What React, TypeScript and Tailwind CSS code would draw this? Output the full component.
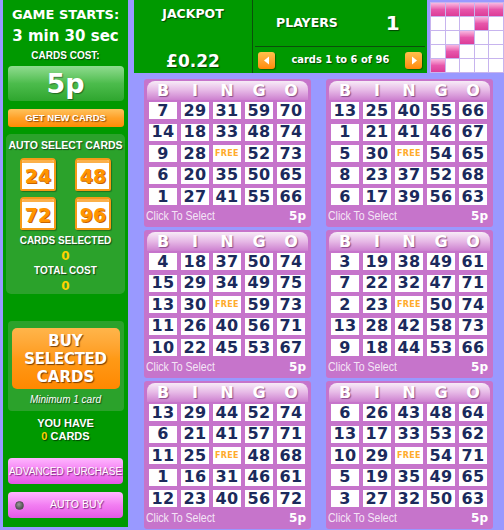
import React from "react";

const cards: (number | null)[][][] = [
  [[7,29,31,59,70],[14,18,33,48,74],[9,28,null,52,73],[6,20,35,50,65],[1,27,41,55,66]],
  [[13,25,40,55,66],[1,21,41,46,67],[5,30,null,54,65],[8,23,37,52,68],[6,17,39,56,63]],
  [[4,18,37,50,74],[15,29,34,49,75],[13,30,null,59,73],[11,26,40,56,71],[10,22,45,53,67]],
  [[3,19,38,49,61],[7,22,32,47,71],[2,23,null,50,74],[13,28,42,58,73],[9,18,44,53,66]],
  [[13,29,44,52,74],[6,21,41,57,71],[11,25,null,48,68],[1,16,31,46,61],[12,23,40,56,72]],
  [[6,26,43,48,64],[13,17,33,53,62],[10,29,null,54,71],[5,19,35,49,65],[3,27,32,50,63]],
];

const V = { fontFamily: '"DejaVu Sans", Verdana, sans-serif' };
const L = { fontFamily: '"Liberation Sans", Arial, sans-serif' };
const shadow = { textShadow: "1px 1px 1px rgba(0,0,0,0.55)" };

function Card({ rows }: { rows: (number | null)[][] }) {
  return (
    <div className="w-[167px] h-[148px] bg-[#c674cb] rounded-[3px] flex flex-col" style={V}>
      <div className="mx-[3px] mt-[2px] h-[19px] rounded-t-[8px] bg-gradient-to-b from-[#f7ecf7] via-[#e6b8e6] to-[#cc80cf] grid grid-cols-[28px_28px_28px_28px_28px] gap-x-[4px] px-[2px]">
        {["B", "I", "N", "G", "O"].map((c) => (
          <div key={c} className="flex items-center justify-center text-white font-bold text-[16px] leading-none" style={{ textShadow: "1px 1px 1px rgba(110,50,110,0.75)" }}>
            {c}
          </div>
        ))}
      </div>
      <div className="ml-[5px] mt-[2px] grid grid-cols-[28px_28px_28px_28px_28px] gap-x-[4px] gap-y-[4.5px]">
        {rows.flat().map((n, i) => (
          <div key={i} className="h-[17px] bg-white flex items-center justify-center">
            {n === null ? (
              <span className="text-[#ffab2a] font-bold text-[8px] tracking-[0.3px]">FREE</span>
            ) : (
              <span className="text-[#1b2a5c] font-bold text-[16px] leading-none tracking-[0.4px]">{n}</span>
            )}
          </div>
        ))}
      </div>
      <div className="flex items-center justify-between flex-1 pl-[2px] pr-[5px]">
        <span className="text-[#f4e4f6] text-[13px] scale-x-[0.81] origin-left whitespace-nowrap" style={L}>
          Click To Select
        </span>
        <span className="text-white font-bold text-[12px]">5p</span>
      </div>
    </div>
  );
}

function CalBtn({ n }: { n: number }) {
  return (
    <div className="w-[36px] h-[33px] rounded-t-[4px] rounded-b-[2px] border-2 border-[#f59a18] bg-white flex flex-col overflow-hidden" style={{ boxShadow: "1px 1px 1px rgba(0,0,0,0.3)" }}>
      <div className="h-[3px] bg-[#fbb04a]" />
      <div className="flex-1 flex items-center justify-center text-[#ff9400] font-bold text-[19px] leading-none" style={{ ...V, textShadow: "1px 1px 0 #c86400" }}>
        {n}
      </div>
    </div>
  );
}

function MiniGrid() {
  const pink = (r: number, c: number) => r === 0 || r + c === 4;
  return (
    <div className="mt-[2px] ml-[3px] w-[74px] h-[71px] bg-[#c7b4ee] grid grid-cols-5 grid-rows-5 gap-px p-px">
      {Array.from({ length: 25 }).map((_, i) => {
        const r = Math.floor(i / 5), c = i % 5;
        return pink(r, c) ? (
          <div key={i} className="bg-gradient-to-b from-[#f7b8e2] via-[#e756ab] to-[#dc3c98]" />
        ) : (
          <div key={i} className="bg-white" />
        );
      })}
    </div>
  );
}

function Arrow({ dir }: { dir: "l" | "r" }) {
  return (
    <div className="w-[17px] h-[17px] rounded-[3px] bg-gradient-to-b from-[#ffc04a] to-[#ff8a00] flex items-center justify-center" style={{ boxShadow: "1px 1px 1px rgba(0,0,0,0.35)" }}>
      <svg width="8" height="9" viewBox="0 0 8 9">
        {dir === "l" ? <polygon points="6,0.5 6,8.5 1,4.5" fill="#fff" /> : <polygon points="2,0.5 2,8.5 7,4.5" fill="#fff" />}
      </svg>
    </div>
  );
}

export default function App() {
  return (
    <div className="w-[504px] h-[530px] bg-[#9999ff] flex overflow-hidden">
      {/* Left panel */}
      <div className="ml-[3px] w-[125px] h-[527px] bg-[#009900] flex flex-col items-center text-white" style={V}>
        <div className="mt-[7px] text-[13px] font-bold leading-[16px] whitespace-nowrap">GAME STARTS:</div>
        <div className="mt-[3px] text-[15px] font-bold leading-[20px] whitespace-nowrap">3 min 30 sec</div>
        <div className="mt-[3px] text-[10px] font-bold leading-[14px]" style={{ ...L, ...shadow }}>CARDS COST:</div>
        <div className="mt-[3px] w-[116px] h-[35px] rounded-[4px] bg-gradient-to-b from-[#8fdc8f] via-[#4cbc4c] to-[#2ea62e] flex items-center justify-center text-[27px] font-bold leading-none" style={{ textShadow: "1px 1px 1px rgba(0,0,0,0.4)" }}>
          5p
        </div>
        <div className="mt-[8px] w-[116px] h-[18px] rounded-[3px] bg-gradient-to-b from-[#ffc25a] via-[#ffa126] to-[#ff8c00] flex items-center justify-center text-[9.5px] font-bold" style={{ ...L, textShadow: "1px 1px 1px rgba(120,60,0,0.8)" }}>
          GET NEW CARDS
        </div>
        <div className="mt-[7px] w-[119px] h-[160px] rounded-[5px] bg-[#2ba22b] flex flex-col items-center">
          <div className="mt-[4px] text-[10.5px] font-bold leading-[14px] whitespace-nowrap" style={{ ...L, ...shadow }}>AUTO SELECT CARDS</div>
          <div className="mt-[6px] flex gap-[19px]">
            <CalBtn n={24} />
            <CalBtn n={48} />
          </div>
          <div className="mt-[6px] flex gap-[19px]">
            <CalBtn n={72} />
            <CalBtn n={96} />
          </div>
          <div className="mt-[4px] text-[10px] font-bold leading-[14px]" style={{ ...L, ...shadow }}>CARDS SELECTED</div>
          <div className="text-[12px] font-bold leading-[16px] text-[#ffd200]">0</div>
          <div className="text-[10px] font-bold leading-[14px]" style={{ ...L, ...shadow }}>TOTAL COST</div>
          <div className="text-[12px] font-bold leading-[16px] text-[#ffd200]">0</div>
        </div>
        <div className="mt-[27px] w-[116px] h-[90px] rounded-[4px] bg-[#2ba22b] flex flex-col items-center">
          <div className="mt-[7px] w-[108px] h-[61px] rounded-[5px] bg-gradient-to-b from-[#ffb54a] via-[#ff9a16] to-[#ff8800] flex flex-col items-center justify-center text-[15px] font-bold leading-[18px]" style={{ ...V, textShadow: "1px 1px 1px rgba(90,40,0,0.8)" }}>
            <span>BUY</span>
            <span className="tracking-[-0.3px]">SELECTED</span>
            <span>CARDS</span>
          </div>
          <div className="mt-[4px] text-[10px] italic leading-[14px]" style={{ ...L, ...shadow }}>Minimum 1 card</div>
        </div>
        <div className="mt-[6px] text-[11px] font-bold leading-[13px]" style={{ ...L, ...shadow }}>YOU HAVE</div>
        <div className="text-[11px] font-bold leading-[13px]" style={{ ...L, ...shadow }}>
          <span className="text-[#ffd200]">0</span> CARDS
        </div>
        <div className="mt-[15px] w-[115px] h-[26px] rounded-[4px] bg-gradient-to-b from-[#ffb6ff] via-[#f27ef2] to-[#e558e5] flex items-center justify-center text-[10px] whitespace-nowrap" style={{ ...L, textShadow: "1px 1px 1px rgba(110,30,110,0.9)" }}>
          ADVANCED PURCHASE
        </div>
        <div className="mt-[8px] w-[115px] h-[26px] rounded-[4px] bg-gradient-to-b from-[#ffb6ff] via-[#f27ef2] to-[#e558e5] flex items-center text-[10.5px] whitespace-nowrap" style={{ ...L, textShadow: "1px 1px 1px rgba(110,30,110,0.9)" }}>
          <div className="ml-[7px] w-[9px] h-[9px] rounded-full bg-[radial-gradient(circle_at_40%_35%,#9a9a9a,#3a3a3a)] border border-[#555]" />
          <span className="ml-[26px]">AUTO BUY</span>
        </div>
      </div>

      {/* Right area */}
      <div className="flex-1 flex flex-col">
        <div className="flex">
          <div className="ml-[6px] w-[293px] h-[73px] bg-[#009900] flex text-white" style={V}>
            <div className="w-[119px] border-r border-[#0b4f0b] flex flex-col items-center">
              <div className="mt-[6px] text-[12.5px] font-bold leading-[16px]" style={shadow}>JACKPOT</div>
              <div className="mt-[29px] text-[17px] font-bold leading-[20px]" style={shadow}>£0.22</div>
            </div>
            <div className="flex-1 flex flex-col">
              <div className="h-[47px] mx-[2px] border-b border-[#0b4f0b] flex items-center">
                <span className="ml-[21px] text-[12.5px] font-bold" style={shadow}>PLAYERS</span>
                <span className="ml-[48px] text-[20px] font-bold" style={shadow}>1</span>
              </div>
              <div className="flex-1 flex items-center justify-between px-[5px]">
                <Arrow dir="l" />
                <span className="text-[11px] font-bold whitespace-nowrap scale-x-[0.9]" style={shadow}>cards 1 to 6 of 96</span>
                <Arrow dir="r" />
              </div>
            </div>
          </div>
          <MiniGrid />
        </div>
        <div className="ml-[16px] mt-[6px] grid grid-cols-[167px_167px] gap-x-[15px] gap-y-[3px]">
          {cards.map((c, i) => (
            <Card key={i} rows={c} />
          ))}
        </div>
      </div>
    </div>
  );
}
